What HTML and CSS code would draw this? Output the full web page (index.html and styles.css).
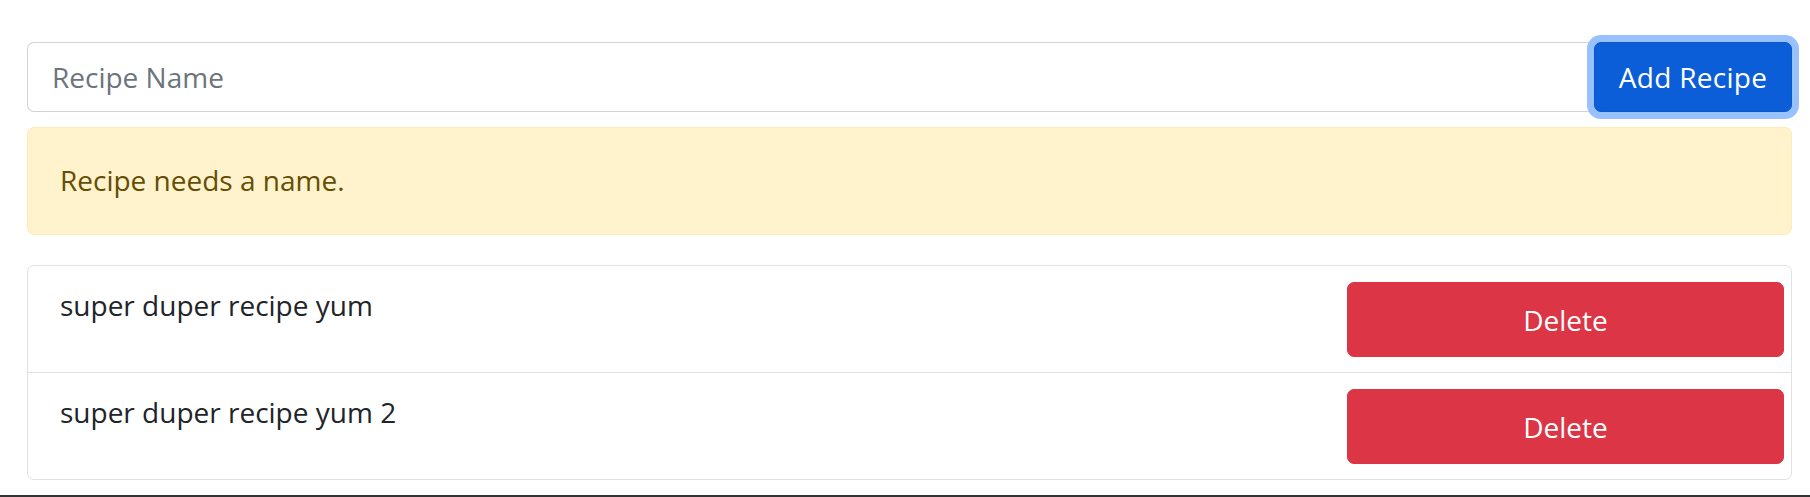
FILE: index.html
```html
<!DOCTYPE html>
<html lang="en">
<head>
<meta charset="utf-8">
<title>Recipes</title>
<link rel="stylesheet" href="styles.css">
</head>
<body>
<main class="page">
  <form class="input-group">
    <input class="form-control" type="text" placeholder="Recipe Name">
    <button class="btn btn-primary focused" type="button">Add Recipe</button>
  </form>
  <div class="alert">Recipe needs a name.</div>
  <ul class="list-group">
    <li class="list-item">
      <span class="recipe-name">super duper recipe yum</span>
      <button class="btn btn-danger" type="button">Delete</button>
    </li>
    <li class="list-item">
      <span class="recipe-name">super duper recipe yum 2</span>
      <button class="btn btn-danger" type="button">Delete</button>
    </li>
  </ul>
</main>
<div class="window-edge"></div>
</body>
</html>
```

FILE: styles.css
```css
* { box-sizing: border-box; }

html, body {
  margin: 0;
  padding: 0;
  background: #fff;
}

body {
  font-family: "Open Sans", "Noto Sans", sans-serif;
  font-size: 28px;
  line-height: 1.5;
  color: #212529;
  height: 497px;
  display: flex;
  flex-direction: column;
  overflow: hidden;
}

.page {
  flex: 1;
  padding: 42px 18px 0 27px;
}

.input-group {
  display: flex;
  height: 70px;
  margin: 0 0 15px;
}

.form-control {
  flex: 1;
  min-width: 0;
  height: 70px;
  border: 1px solid #ced4da;
  border-right: 0;
  border-radius: 7px 0 0 7px;
  padding: 0 22px 0 24px;
  font: inherit;
  color: #212529;
  outline: none;
}

.form-control::placeholder {
  color: #6c757d;
  opacity: 1;
}

.btn {
  font: inherit;
  border: 1px solid transparent;
  border-radius: 7px;
  color: #fff;
  cursor: pointer;
  padding: 0 20px;
}

.btn-primary {
  background: #0b5ed7;
  border-color: #0a58ca;
  width: 198px;
  height: 70px;
  position: relative;
  letter-spacing: 0.3px;
}

.btn-primary.focused {
  box-shadow: 0 0 0 7px #98c1fd;
}

.alert {
  height: 108px;
  margin: 0 0 30px;
  padding: 0 28px 2px 32px;
  display: flex;
  align-items: center;
  background: #fff3cd;
  border: 1px solid #ffecb5;
  border-radius: 7px;
  color: #664d03;
}

.list-group {
  list-style: none;
  margin: 0;
  padding: 0;
  border: 1px solid #dee2e6;
  border-radius: 7px;
}

.list-item {
  display: flex;
  align-items: flex-start;
  padding: 15px 7px 15px 32px;
}

.list-item + .list-item {
  border-top: 1px solid #dee2e6;
}

.recipe-name {
  flex: 1;
  padding-top: 3px;
}

.btn-danger {
  width: 437px;
  height: 75px;
  margin-top: 1px;
  background: #dc3545;
  border-color: #dc3545;
}

.window-edge {
  height: 2px;
  background: #333;
  flex: none;
}
```
